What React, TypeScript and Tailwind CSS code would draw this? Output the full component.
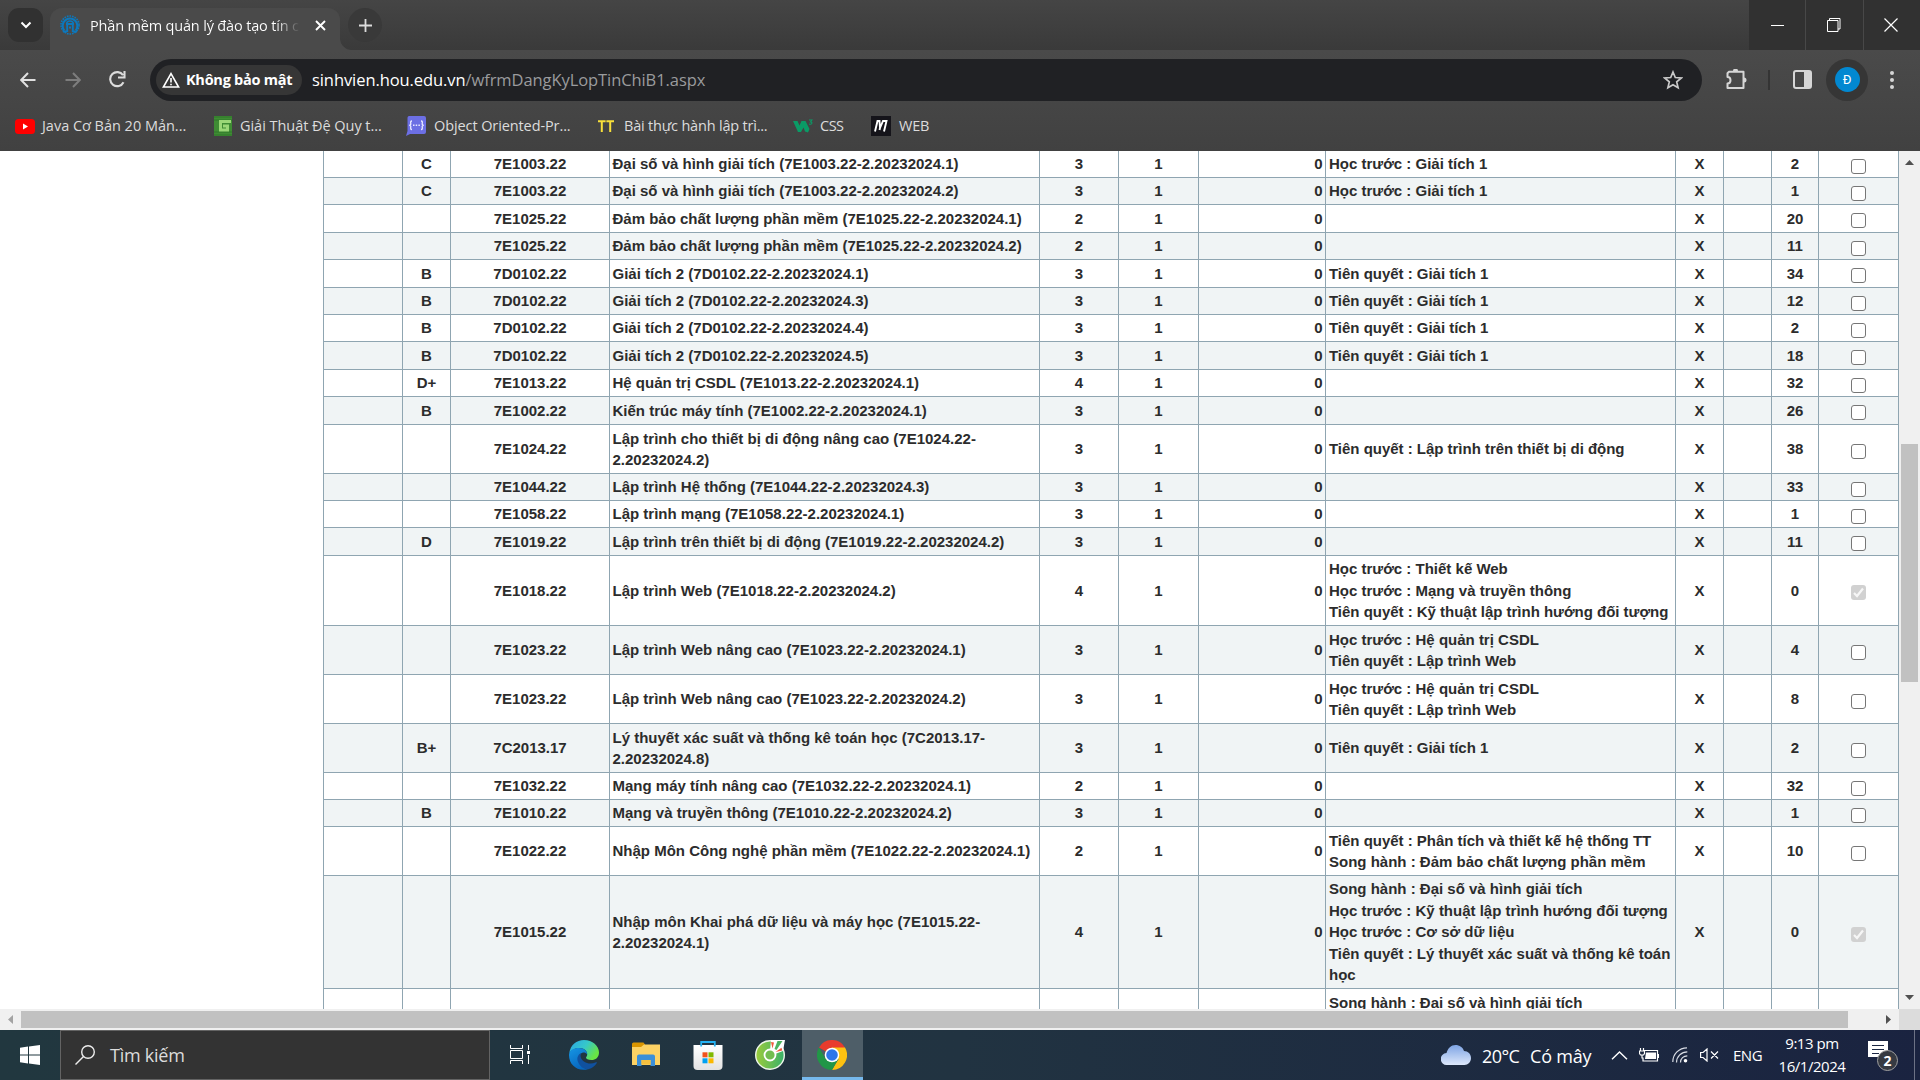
import React from "react";

type Row = { h: number; grade?: string; code: string; name: string[]; cr: string; pre?: string[]; left: string; checked?: boolean };

const rows: Row[] = [
  { h: 27, grade: "C", code: "7E1003.22", name: ["Đại số và hình giải tích (7E1003.22-2.20232024.1)"], cr: "3", pre: ["Học trước : Giải tích 1"], left: "2" },
  { h: 27, grade: "C", code: "7E1003.22", name: ["Đại số và hình giải tích (7E1003.22-2.20232024.2)"], cr: "3", pre: ["Học trước : Giải tích 1"], left: "1" },
  { h: 28, code: "7E1025.22", name: ["Đảm bảo chất lượng phần mềm (7E1025.22-2.20232024.1)"], cr: "2", left: "20" },
  { h: 27, code: "7E1025.22", name: ["Đảm bảo chất lượng phần mềm (7E1025.22-2.20232024.2)"], cr: "2", left: "11" },
  { h: 28, grade: "B", code: "7D0102.22", name: ["Giải tích 2 (7D0102.22-2.20232024.1)"], cr: "3", pre: ["Tiên quyết : Giải tích 1"], left: "34" },
  { h: 27, grade: "B", code: "7D0102.22", name: ["Giải tích 2 (7D0102.22-2.20232024.3)"], cr: "3", pre: ["Tiên quyết : Giải tích 1"], left: "12" },
  { h: 27, grade: "B", code: "7D0102.22", name: ["Giải tích 2 (7D0102.22-2.20232024.4)"], cr: "3", pre: ["Tiên quyết : Giải tích 1"], left: "2" },
  { h: 28, grade: "B", code: "7D0102.22", name: ["Giải tích 2 (7D0102.22-2.20232024.5)"], cr: "3", pre: ["Tiên quyết : Giải tích 1"], left: "18" },
  { h: 27, grade: "D+", code: "7E1013.22", name: ["Hệ quản trị CSDL (7E1013.22-2.20232024.1)"], cr: "4", left: "32" },
  { h: 28, grade: "B", code: "7E1002.22", name: ["Kiến trúc máy tính (7E1002.22-2.20232024.1)"], cr: "3", left: "26" },
  { h: 49, code: "7E1024.22", name: ["Lập trình cho thiết bị di động nâng cao (7E1024.22-", "2.20232024.2)"], cr: "3", pre: ["Tiên quyết : Lập trình trên thiết bị di động"], left: "38" },
  { h: 27, code: "7E1044.22", name: ["Lập trình Hệ thống (7E1044.22-2.20232024.3)"], cr: "3", left: "33" },
  { h: 27, code: "7E1058.22", name: ["Lập trình mạng (7E1058.22-2.20232024.1)"], cr: "3", left: "1" },
  { h: 28, grade: "D", code: "7E1019.22", name: ["Lập trình trên thiết bị di động (7E1019.22-2.20232024.2)"], cr: "3", left: "11" },
  { h: 70, code: "7E1018.22", name: ["Lập trình Web (7E1018.22-2.20232024.2)"], cr: "4", pre: ["Học trước : Thiết kế Web", "Học trước : Mạng và truyền thông", "Tiên quyết : Kỹ thuật lập trình hướng đối tượng"], left: "0", checked: true },
  { h: 49, code: "7E1023.22", name: ["Lập trình Web nâng cao (7E1023.22-2.20232024.1)"], cr: "3", pre: ["Học trước : Hệ quản trị CSDL", "Tiên quyết : Lập trình Web"], left: "4" },
  { h: 49, code: "7E1023.22", name: ["Lập trình Web nâng cao (7E1023.22-2.20232024.2)"], cr: "3", pre: ["Học trước : Hệ quản trị CSDL", "Tiên quyết : Lập trình Web"], left: "8" },
  { h: 49, grade: "B+", code: "7C2013.17", name: ["Lý thuyết xác suất và thống kê toán học (7C2013.17-", "2.20232024.8)"], cr: "3", pre: ["Tiên quyết : Giải tích 1"], left: "2" },
  { h: 27, code: "7E1032.22", name: ["Mạng máy tính nâng cao (7E1032.22-2.20232024.1)"], cr: "2", left: "32" },
  { h: 27, grade: "B", code: "7E1010.22", name: ["Mạng và truyền thông (7E1010.22-2.20232024.2)"], cr: "3", left: "1" },
  { h: 49, code: "7E1022.22", name: ["Nhập Môn Công nghệ phần mềm (7E1022.22-2.20232024.1)"], cr: "2", pre: ["Tiên quyết : Phân tích và thiết kế hệ thống TT", "Song hành : Đảm bảo chất lượng phần mềm"], left: "10" },
  { h: 113, code: "7E1015.22", name: ["Nhập môn Khai phá dữ liệu và máy học (7E1015.22-", "2.20232024.1)"], cr: "4", pre: ["Song hành : Đại số và hình giải tích", "Học trước : Kỹ thuật lập trình hướng đối tượng", "Học trước : Cơ sở dữ liệu", "Tiên quyết : Lý thuyết xác suất và thống kê toán", "học"], left: "0", checked: true },
];

const cols = "grid grid-cols-[79px_48px_159px_430px_79px_80px_127px_350px_48px_48px_47px_80px]";
const cell = "flex items-center border-r border-[#8fa5b1]";
const mid = cell + " justify-center";

function Check({ on }: { on?: boolean }) {
  return on ? (
    <span className="mt-[4px] flex h-[15px] w-[15px] items-center justify-center rounded-[3px] bg-[#d1d1d1]">
      <svg viewBox="0 0 15 15" className="h-[15px] w-[15px]" fill="none" stroke="#f6f6f6" strokeWidth="2.2"><path d="M3 8l3 3 6-7.500" /></svg>
    </span>
  ) : (
    <span className="mt-[4px] h-[15px] w-[15px] rounded-[3px] border-[1.3px] border-[#767676] bg-white" />
  );
}

function Lines({ t }: { t?: string[] }) {
  return (
    <div className="whitespace-nowrap">
      {t?.map((s, i) => (
        <div key={i} className={s.startsWith("Tiên") ? "tracking-[-0.02px]" : ""}>{s}</div>
      ))}
    </div>
  );
}

function Table() {
  return (
    <div className="ml-[323px] w-[1576px] shrink-0 border-l border-[#8fa5b1] font-['Liberation_Sans',Arial,sans-serif] text-[15px] leading-[21.4px] font-bold text-[#2c2c2c]">
      {rows.map((r, i) => (
        <div key={i} className={`${cols} border-b border-[#8fa5b1] ${i % 2 ? "bg-[#f0f4f5]" : "bg-white"}`} style={{ height: r.h }}>
          <div className={cell} />
          <div className={mid}>{r.grade}</div>
          <div className={mid}>{r.code}</div>
          <div className={cell + " pl-[2.5px]"}><Lines t={r.name} /></div>
          <div className={mid}>{r.cr}</div>
          <div className={mid}>{"1"}</div>
          <div className={cell + " justify-end pr-[2.5px]"}>0</div>
          <div className={cell + " pl-[3px]"}><Lines t={r.pre} /></div>
          <div className={mid}>X</div>
          <div className={cell} />
          <div className={mid}>{r.left}</div>
          <div className={mid}><Check on={r.checked} /></div>
        </div>
      ))}
      <div className={cols + " h-[60px]"}>
        {Array.from({ length: 12 }, (_, i) => (
          <div key={i} className="border-r border-[#8fa5b1] pt-[3px] pl-[3px]">{i === 7 ? "Song hành : Đại số và hình giải tích" : ""}</div>
        ))}
      </div>
    </div>
  );
}

function TabStrip() {
  return (
    <div className="flex h-[50px] bg-gradient-to-b from-[#454545] to-[#3a3a3a]">
      <div className="flex w-[50px] justify-end">
        <div className="mt-2 mr-[7px] flex h-[34px] w-[35px] items-center justify-center rounded-[11px] bg-[#313131]">
          <svg className="h-3 w-3" viewBox="0 0 12 12" fill="none" stroke="#fff" strokeWidth="2"><path d="M1.500 3.500L6 8l4.500-4.500" /></svg>
        </div>
      </div>
      <div className="mt-2 flex h-[42px] w-[290px] rounded-t-[12px] bg-[#4a4a4a] pl-[10px]">
        <svg className="mt-[7px] h-5 w-5 shrink-0" viewBox="0 0 20 20" fill="none" stroke="#0c78bd">
          <circle cx="10" cy="10" r="9" strokeWidth="1.600" strokeDasharray="1.600 1" />
          <path d="M4.200 15.500A7.400 7.400 0 1115.800 15.500" strokeWidth="2.200" />
          <path d="M6.500 8.500a3.600 3.200 0 017 0" strokeWidth="1.400" />
          <path d="M6 9h8M7.200 9v8M12.800 9v8M9 12.500h2M3 16.500h4M13 16.500h4" strokeWidth="1.900" />
        </svg>
        <div className="mt-[8px] ml-[10px] h-[22px] w-[210px] overflow-hidden bg-gradient-to-r from-white from-88% to-transparent bg-clip-text font-['Open_Sans',sans-serif] text-[14.500px] leading-[20px] tracking-[-0.170px] whitespace-nowrap text-transparent">Phần mềm quản lý đào tạo tín chỉ</div>
        <svg className="mt-[12px] ml-[15px] h-[11px] w-[11px]" viewBox="0 0 11 11" stroke="#fff" strokeWidth="1.900"><path d="M1 1l9 9M10 1l-9 9" /></svg>
      </div>
      <svg className="mt-[38px] h-3 w-3 shrink-0" viewBox="0 0 12 12"><path d="M0 0a12 12 0 0012 12H0z" fill="#4a4a4a" /></svg>
      <div className="mt-2 -ml-[4px] flex h-[34px] w-[34px] items-center justify-center rounded-full bg-[#393939]">
        <svg className="h-[13px] w-[13px]" viewBox="0 0 13 13" stroke="#dcdcdc" strokeWidth="1.800"><path d="M6.500 0v13M0 6.500h13" /></svg>
      </div>
      <div className="ml-auto flex h-[50px] w-[171px] gap-px bg-[#484848]">
        <div className="flex w-[56px] items-center justify-center bg-[#313131]"><span className="h-px w-[13px] bg-white" /></div>
        <div className="flex w-[57px] items-center justify-center bg-[#313131] pr-[2px]">
          <svg className="h-[14px] w-[14px]" viewBox="0 0 14 14" fill="none" stroke="#fff"><path d="M.5 2.500h10.500v11H.5zM2.500 2.500V.5h10.500V11H11" /></svg>
        </div>
        <div className="flex w-[56px] items-center justify-center bg-[#313131] pr-[2px]">
          <svg className="h-[14px] w-[14px]" viewBox="0 0 14 14" stroke="#fff" strokeWidth="1.200"><path d="M.5.5l13 13M13.500.5l-13 13" /></svg>
        </div>
      </div>
    </div>
  );
}

function Toolbar() {
  return (
    <div className="flex h-[58px] items-center pt-[1px]">
      <svg className="ml-5 h-4 w-4" viewBox="0 0 16 16" fill="none" stroke="#e0e0e0" strokeWidth="2"><path d="M15.500 8H1.500M8 1L1.200 8 8 15" /></svg>
      <svg className="ml-[29px] h-4 w-4" viewBox="0 0 16 16" fill="none" stroke="#7d7d7d" strokeWidth="2"><path d="M.5 8h14M8 1l6.800 7L8 15" /></svg>
      <svg className="ml-[28px] h-[17px] w-[17px]" viewBox="0 0 17 17" fill="none" stroke="#dcdcdc" strokeWidth="2.100"><path d="M14.500 11.200A7 7 0 1114 4.200M15.500 0v6.500h-6.500" /></svg>
      <div className="ml-[24px] flex h-[42px] w-[1552px] items-center rounded-full bg-[#202124] pl-[6px]">
        <div className="flex h-[30px] w-[146px] items-center rounded-full bg-[#363636] pl-[6px]">
          <svg className="h-[16px] w-[18px]" viewBox="0 0 18 16" fill="none" stroke="#fff" strokeWidth="1.600"><path d="M9 1.600L16.600 15H1.400zM9 6v4.500M9 11.700v1.600" /></svg>
          <span className="ml-[6px] font-['Open_Sans',sans-serif] text-[14.500px] leading-5 font-bold tracking-[-0.260px] whitespace-nowrap text-white">Không bảo mật</span>
        </div>
        <span className="ml-[10px] font-['Open_Sans',sans-serif] text-[16.500px] leading-6 tracking-[-0.080px] whitespace-nowrap text-[#9a9b9d]"><span className="text-white">sinhvien.hou.edu.vn</span>/wfrmDangKyLopTinChiB1.aspx</span>
        <svg className="mr-[19px] ml-auto h-5 w-5" viewBox="0 0 20 20" fill="none" stroke="#c9c9c9" strokeWidth="1.700"><path d="M10 2l2.300 5.500 6 .5-4.600 3.900 1.400 5.900L10 14.700l-5.100 3.100 1.400-5.900L1.700 8l6-.5z" /></svg>
      </div>
      <svg className="ml-[24px] h-[21px] w-[21px]" viewBox="0 0 21 21" fill="none" stroke="#d6d6d6" strokeWidth="2"><path d="M3 2.800h14.500V19H1.500v-4.500c4 0 4-6.500 0-6.500V4.300L3 2.800z" strokeLinejoin="round" /><path d="M7 2a2.500 2.500 0 015 0zM18 8.500a2.500 2.500 0 010 5z" fill="#d6d6d6" stroke="none" /></svg>
      <span className="ml-[21px] h-[20px] w-[2px] bg-[#343434]" />
      <svg className="ml-[23px] h-[19px] w-[19px]" viewBox="0 0 19 19"><rect x="1" y="1" width="17" height="17" rx="2" fill="none" stroke="#d6d6d6" strokeWidth="2" /><path d="M11 1h7v17h-7z" fill="#d6d6d6" /></svg>
      <div className="ml-[14px] flex h-[42px] w-[42px] items-center justify-center rounded-full bg-[#363636]">
        <div className="flex h-[25px] w-[25px] items-center justify-center rounded-full bg-[#0288d1] font-['Roboto',sans-serif] text-[13px] text-white">Đ</div>
      </div>
      <div className="ml-[22px] flex flex-col gap-[3px]">
        <span className="h-1 w-1 rounded-full bg-[#d6d6d6]" /><span className="h-1 w-1 rounded-full bg-[#d6d6d6]" /><span className="h-1 w-1 rounded-full bg-[#d6d6d6]" />
      </div>
    </div>
  );
}

function Bookmarks() {
  return (
    <div className="flex h-[43px] items-center pb-[7px] font-['Open_Sans',sans-serif] text-[14.500px] leading-5 text-[#dcdcdc]">
      <div className="ml-[15px] flex w-[199px] items-center">
        <svg className="h-[15px] w-5" viewBox="0 0 20 15"><rect width="20" height="15" rx="3.500" fill="#f00" /><path d="M8 4.500l5 3-5 3z" fill="#fff" /></svg>
        <span className="ml-[7px] tracking-[-0.020px] whitespace-nowrap">Java Cơ Bản 20 Mản...</span>
      </div>
      <div className="flex w-[192px] items-center">
        <svg className="h-5 w-[18px]" viewBox="0 0 18 20"><path d="M0 0h18v20H0z" fill="#3f8c34" /><path d="M0 1h18M0 4h18M0 16h18M0 19h18" stroke="#2f7728" /><path d="M17 5.500H6.500v8.500h7v-4H9" fill="none" stroke="#9ad777" strokeWidth="3" /></svg>
        <span className="ml-[8px] tracking-[-0.040px] whitespace-nowrap">Giải Thuật Đệ Quy t...</span>
      </div>
      <div className="flex w-[192px] items-center">
        <svg className="h-5 w-5" viewBox="0 0 20 20"><path d="M4 0h14a2 2 0 012 2v14a2 2 0 01-2 2H4l-4 2 1.500-5V2A2 2 0 014 0z" fill="#6c6fe4" /><path d="M6 5c-2 0-1.200 2-1.200 3.200l-1 1.100 1 1c0 1.200-.8 3.200 1.200 3.200M15 5c2 0 1.200 2 1.200 3.200l1 1.100-1 1c0 1.200.8 3.200-1.200 3.200" fill="none" stroke="#e8e8ff" strokeWidth="1.300" /><path d="M7 9.300h7.500" stroke="#e8e8ff" strokeWidth="1.500" strokeDasharray="1.500 1.200" /></svg>
        <span className="ml-2 tracking-[-0.100px] whitespace-nowrap">Object Oriented-Pr...</span>
      </div>
      <div className="flex w-[195px] items-center">
        <svg className="h-[12px] w-[16px]" viewBox="0 0 16 12" stroke="#f8df3a" strokeWidth="2"><path d="M0 1.200h7.600M8.400 1.200H16M3.800 1v11M12.200 1v11" /></svg>
        <span className="ml-[10px] tracking-[-0.200px] whitespace-nowrap">Bài thực hành lập trì...</span>
      </div>
      <div className="flex w-[78px] items-center">
        <svg className="h-[14px] w-[20px]" viewBox="0 0 20 14"><path d="M0 2h4.500l2 4.500L8.500 2h4l4 8-1.500 3.500-3-1-1.500-4L8 13H5z" fill="#0a9b66" /><path d="M16 1h3l-1.500 2c2.500 0 1.500 3-1.500 2" fill="none" stroke="#0a9b66" strokeWidth="1.100" /></svg>
        <span className="ml-[7px] tracking-[-0.500px]">CSS</span>
      </div>
      <div className="flex items-center">
        <svg className="h-5 w-5" viewBox="0 0 20 20"><path d="M0 0h20v20H0z" fill="#15141a" /><path d="M4 15.500L6.500 5h2l.5 7 3-7h3.500L13 15.500M9 12l-.5 2" fill="none" stroke="#fff" strokeWidth="1.900" /></svg>
        <span className="ml-2 tracking-[-0.200px]">WEB</span>
      </div>
    </div>
  );
}

function Scrollbars() {
  return (
    <div className="flex h-[21px] bg-[#f0f0f0]">
      <div className="flex w-[21px] items-center justify-center"><svg className="h-[9px] w-[5px]" viewBox="0 0 5 9"><path d="M5 0v9L0 4.500z" fill="#a3a3a3" /></svg></div>
      <div className="my-[2px] w-[1827px] bg-[#c1c1c1]" />
      <div className="ml-[38px] flex items-center"><svg className="h-[9px] w-[5px]" viewBox="0 0 5 9"><path d="M0 0v9l5-4.500z" fill="#505050" /></svg></div>
      <div className="ml-auto w-[21px] bg-[#dcdcdc]" />
    </div>
  );
}

function Taskbar() {
  return (
    <div className="flex h-[50px] bg-gradient-to-r from-[#21373f] via-[#213341] to-[#1a2340] font-['Open_Sans',sans-serif] text-white">
      <div className="flex w-[60px] items-center justify-center">
        <svg className="h-5 w-5" viewBox="0 0 20 20" fill="#fff"><path d="M0 2.700L8 1.500V9.400H0zM9 1.400L20 0v9.400H9zM0 10.400h8v8L0 17.300zM9 10.400h11V20L9 18.500z" /></svg>
      </div>
      <div className="flex w-[430px] items-center border border-[#636363] bg-[#333] pl-[14px]">
        <svg className="h-5 w-5" viewBox="0 0 20 20" fill="none" stroke="#ededed" strokeWidth="1.400"><circle cx="13" cy="7" r="6.300" /><path d="M8.500 11.500L.5 19.500" /></svg>
        <span className="ml-[15px] text-[18px] tracking-[-0.250px] text-[#dcdcdc]">Tìm kiếm</span>
      </div>
      <svg className="mt-[15px] ml-5 h-[20px] w-[20px]" viewBox="0 0 20 20" fill="none" stroke="#fff"><path d="M.5 0v3.500h12V0M.5 5.500h12v8H.5zM.5 19v-3.500h12V19M18.500 0v5M18.500 10v9" /><path d="M17 6h3v3h-3z" fill="#fff" stroke="none" /></svg>
      <svg className="mt-[10px] ml-[39px] h-[30px] w-[30px]" viewBox="0 0 30 30">
        <defs>
          <linearGradient id="ea" x1="0" y1="0" x2="1" y2=".5"><stop offset="0" stopColor="#2aa5e8" /><stop offset=".55" stopColor="#36c8c9" /><stop offset="1" stopColor="#68e443" /></linearGradient>
          <linearGradient id="eb" x1="0" y1="0" x2="0.500" y2="1"><stop offset="0" stopColor="#1596e5" /><stop offset="1" stopColor="#0866bd" /></linearGradient>
        </defs>
        <path d="M.3 13C1.500 5 7.500 0 15 0c8.500 0 15 6 15 12.500 0 5-3.500 7.500-7.500 7.500-3.500 0-5.500-1-5.500-2.200 0-.8 1.200-1.200 1.200-3.500 0-3.300-3-6.300-8-6.300-4 0-7.500 1.800-9.900 5z" fill="url(#ea)" />
        <path d="M0 15C0 10.500 4.500 8 10 8c5.500 0 8.300 3.300 8.200 6.300-1-1.300-2.600-2-4.200-1.800-3 .5-4.800 3.500-4.300 7C10.500 25 15 29 19 29.200 8.500 32 0 25 0 15z" fill="url(#eb)" />
        <path d="M12.500 13c-3.500 1.200-5 5-3.600 8.500C10.500 26.500 15.500 30 20 29c3-.7 6.300-3.300 7.800-6 .4-.7-.2-1-.8-.7-7 3.200-13.500-.300-15-4.300-.700-2-.5-3.800.5-5z" fill="#10519f" />
      </svg>
      <svg className="mt-[12px] ml-[33px] h-[25px] w-[28px]" viewBox="0 0 28 25"><path d="M0 2a1.500 1.500 0 011.500-1.500h10L13 2.500 12 5H0z" fill="#d99500" /><path d="M0 5h9l3-2.500h16V23H0z" fill="#fcd264" /><path d="M5 24V14.500a2 2 0 012-2h14a2 2 0 012 2V24h-4.500v-6h-9v6z" fill="#3b8fd8" /><path d="M9.500 18h9v4.500h-9z" fill="#f5bf3e" /></svg>
      <svg className="mt-[10px] ml-[33px] h-[30px] w-[30px]" viewBox="0 0 30 30"><defs><linearGradient id="st" x1="0" y1="0" x2="0" y2="1"><stop offset="0" stopColor="#fff" /><stop offset="1" stopColor="#e2e2e2" /></linearGradient></defs><path d="M.5 5h29v21a4 4 0 01-4 4h-21a4 4 0 01-4-4z" fill="url(#st)" /><path d="M8.200 6.500V2h13.600v4.500" fill="none" stroke="#24b2f3" strokeWidth="1.800" /><path d="M9.500 12.300h5v5h-5z" fill="#f1511b" /><path d="M15.500 12.300h5v5h-5z" fill="#80b900" /><path d="M9.500 18.300h5v5h-5z" fill="#00a1f1" /><path d="M15.500 18.300h5v5h-5z" fill="#fbb800" /></svg>
      <svg className="mt-[10px] ml-[32px] h-[30px] w-[30px]" viewBox="0 0 30 30">
        <defs><linearGradient id="cc" x1="0" y1="0" x2="1" y2="0"><stop offset="0" stopColor="#9ccb3c" /><stop offset="1" stopColor="#38b169" /></linearGradient></defs>
        <circle cx="15" cy="15" r="14.300" fill="url(#cc)" stroke="#eef6ea" strokeWidth="1.400" />
        <path d="M15 11L16 0h14l-2 11-8 3z" fill="#fff" />
        <circle cx="15" cy="15" r="5.500" fill="#72bd50" stroke="#fff" strokeWidth="1.800" />
        <path d="M16 2l3 .5-1.500 6z" fill="#ef5a3c" /><path d="M19.500 9l3-8h5l-6 9z" fill="#4bb35f" /><path d="M20.500 12l6-4.200.8 2.800z" fill="#ef5a3c" />
      </svg>
      <div className="ml-[17px] flex h-[50px] w-[61px] justify-center border-b-[3px] border-[#76b9ed] bg-[#4e5e68] pr-px">
        <svg className="mt-[10px] h-[30px] w-[30px]" viewBox="0 0 30 30">
          <path d="M15 15L2 7.500A15 15 0 0128 7.500z" fill="#e93b2d" /><path d="M15 15V7.500h13A15 15 0 0115 30l6.500-11z" fill="#fdc111" /><path d="M2 7.500A15 15 0 0015 30l6.500-11.200-13 0z" fill="#219647" />
          <circle cx="15" cy="15" r="7.300" fill="#fff" /><circle cx="15" cy="15" r="5.800" fill="#2f76ea" />
        </svg>
      </div>
      <div className="ml-auto flex items-center">
        <svg className="h-[20px] w-[30px]" viewBox="0 0 30 20"><defs><linearGradient id="cl" x1="0" y1="0" x2="0" y2="1"><stop offset="0" stopColor="#7ea4e4" /><stop offset="1" stopColor="#dde8fb" /></linearGradient></defs><path d="M6 20a6 6 0 01-.5-12C7 3 10 0 14.500 0c4 0 7.500 2.500 8.500 6 4 0 7 3 7 7s-3 7-6.500 7z" fill="url(#cl)" /></svg>
        <span className="mt-[2px] ml-[11px] w-[48px] text-[18px] tracking-[-0.600px] whitespace-nowrap">20°C</span>
        <span className="mt-[2px] w-[81px] text-[18px] tracking-[-0.200px] whitespace-nowrap">Có mây</span>
        <svg className="h-[9px] w-[17px]" viewBox="0 0 17 9" fill="none" stroke="#fff" strokeWidth="1.400"><path d="M1 8.300L8.500 1 16 8.300" /></svg>
        <svg className="ml-[11px] h-[14px] w-[20px]" viewBox="0 0 20 14"><path d="M5 2.500h13.500v10.500H4V9.500M1.500 0v3M4.500 0v3M.5 3h5v2.500l-1 1.500h-3L.5 5.500zM3 7v3.500" fill="none" stroke="#fff" strokeWidth="1.200" /><path d="M7 4.500h10v6.500H6z" fill="#fff" /><path d="M19 6h1v4h-1z" fill="#fff" /></svg>
        <svg className="ml-[13px] h-[16px] w-[16px]" viewBox="0 0 16 16" fill="none" stroke="#d8dce4" strokeWidth="1.200"><path d="M.8 15C.8 7 7 .8 15 .8M4.500 15.500C4.500 9.500 9.500 4.800 15.300 4.800M8.500 15.500c0-4 3-6.700 6.800-6.700" /><circle cx="13.500" cy="13.700" r="1.800" fill="#fff" stroke="none" /></svg>
        <svg className="ml-[12px] h-[14px] w-[19px]" viewBox="0 0 19 14" fill="none" stroke="#fff" strokeWidth="1.200"><path d="M.6 4.500h2.500L7 1v12L3.100 9.500H.6zM11 3.500l7 7M18 3.500l-7 7" /></svg>
        <span className="ml-[14px] w-[45px] text-[15px] tracking-[-0.500px]">ENG</span>
        <div className="w-[68px] text-center text-[15px] leading-[23px] tracking-[-0.450px] whitespace-nowrap"><div>9:13 pm</div><div>16/1/2024</div></div>
        <div className="relative ml-[22px] h-[30px] w-[31px] pt-[1px]">
          <svg className="h-5 w-5" viewBox="0 0 20 20"><path d="M0 0h20v16h-4v4l-4-4H0z" fill="#fff" /><path d="M4 4.500h12M4 8.500h12M4 12.500h7" stroke="#1c2744" /></svg>
          <span className="absolute top-[10px] left-[9px] flex h-[21px] w-[21px] items-center justify-center rounded-full border border-[#a0a0a0] bg-[#363a42] text-[14px] font-bold">2</span>
        </div>
        <span className="ml-[15px] h-[50px] w-px bg-[#6c7285]" /><span className="w-[5px]" />
      </div>
    </div>
  );
}

export default function App() {
  return (
    <div className="flex h-[1080px] w-[1920px] flex-col overflow-hidden bg-white">
      <TabStrip />
      <div className="h-[101px] shrink-0 bg-gradient-to-b from-[#4a4a4a] to-[#414141]"><Toolbar /><Bookmarks /></div>
      <div className="flex h-[858px] shrink-0 overflow-hidden">
        <Table />
        <div className="flex h-[858px] w-[21px] flex-col items-center bg-[#f0f0f0]">
          <svg className="mt-[9px] h-[5px] w-[9px] shrink-0" viewBox="0 0 9 5"><path d="M0 5h9L4.500 0z" fill="#505050" /></svg>
          <div className="mt-[279px] h-[238px] w-[17px] shrink-0 bg-[#c1c1c1]" />
          <svg className="mt-auto mb-[9px] h-[5px] w-[9px] shrink-0" viewBox="0 0 9 5"><path d="M0 0h9L4.500 5z" fill="#505050" /></svg>
        </div>
      </div>
      <Scrollbars />
      <Taskbar />
    </div>
  );
}
